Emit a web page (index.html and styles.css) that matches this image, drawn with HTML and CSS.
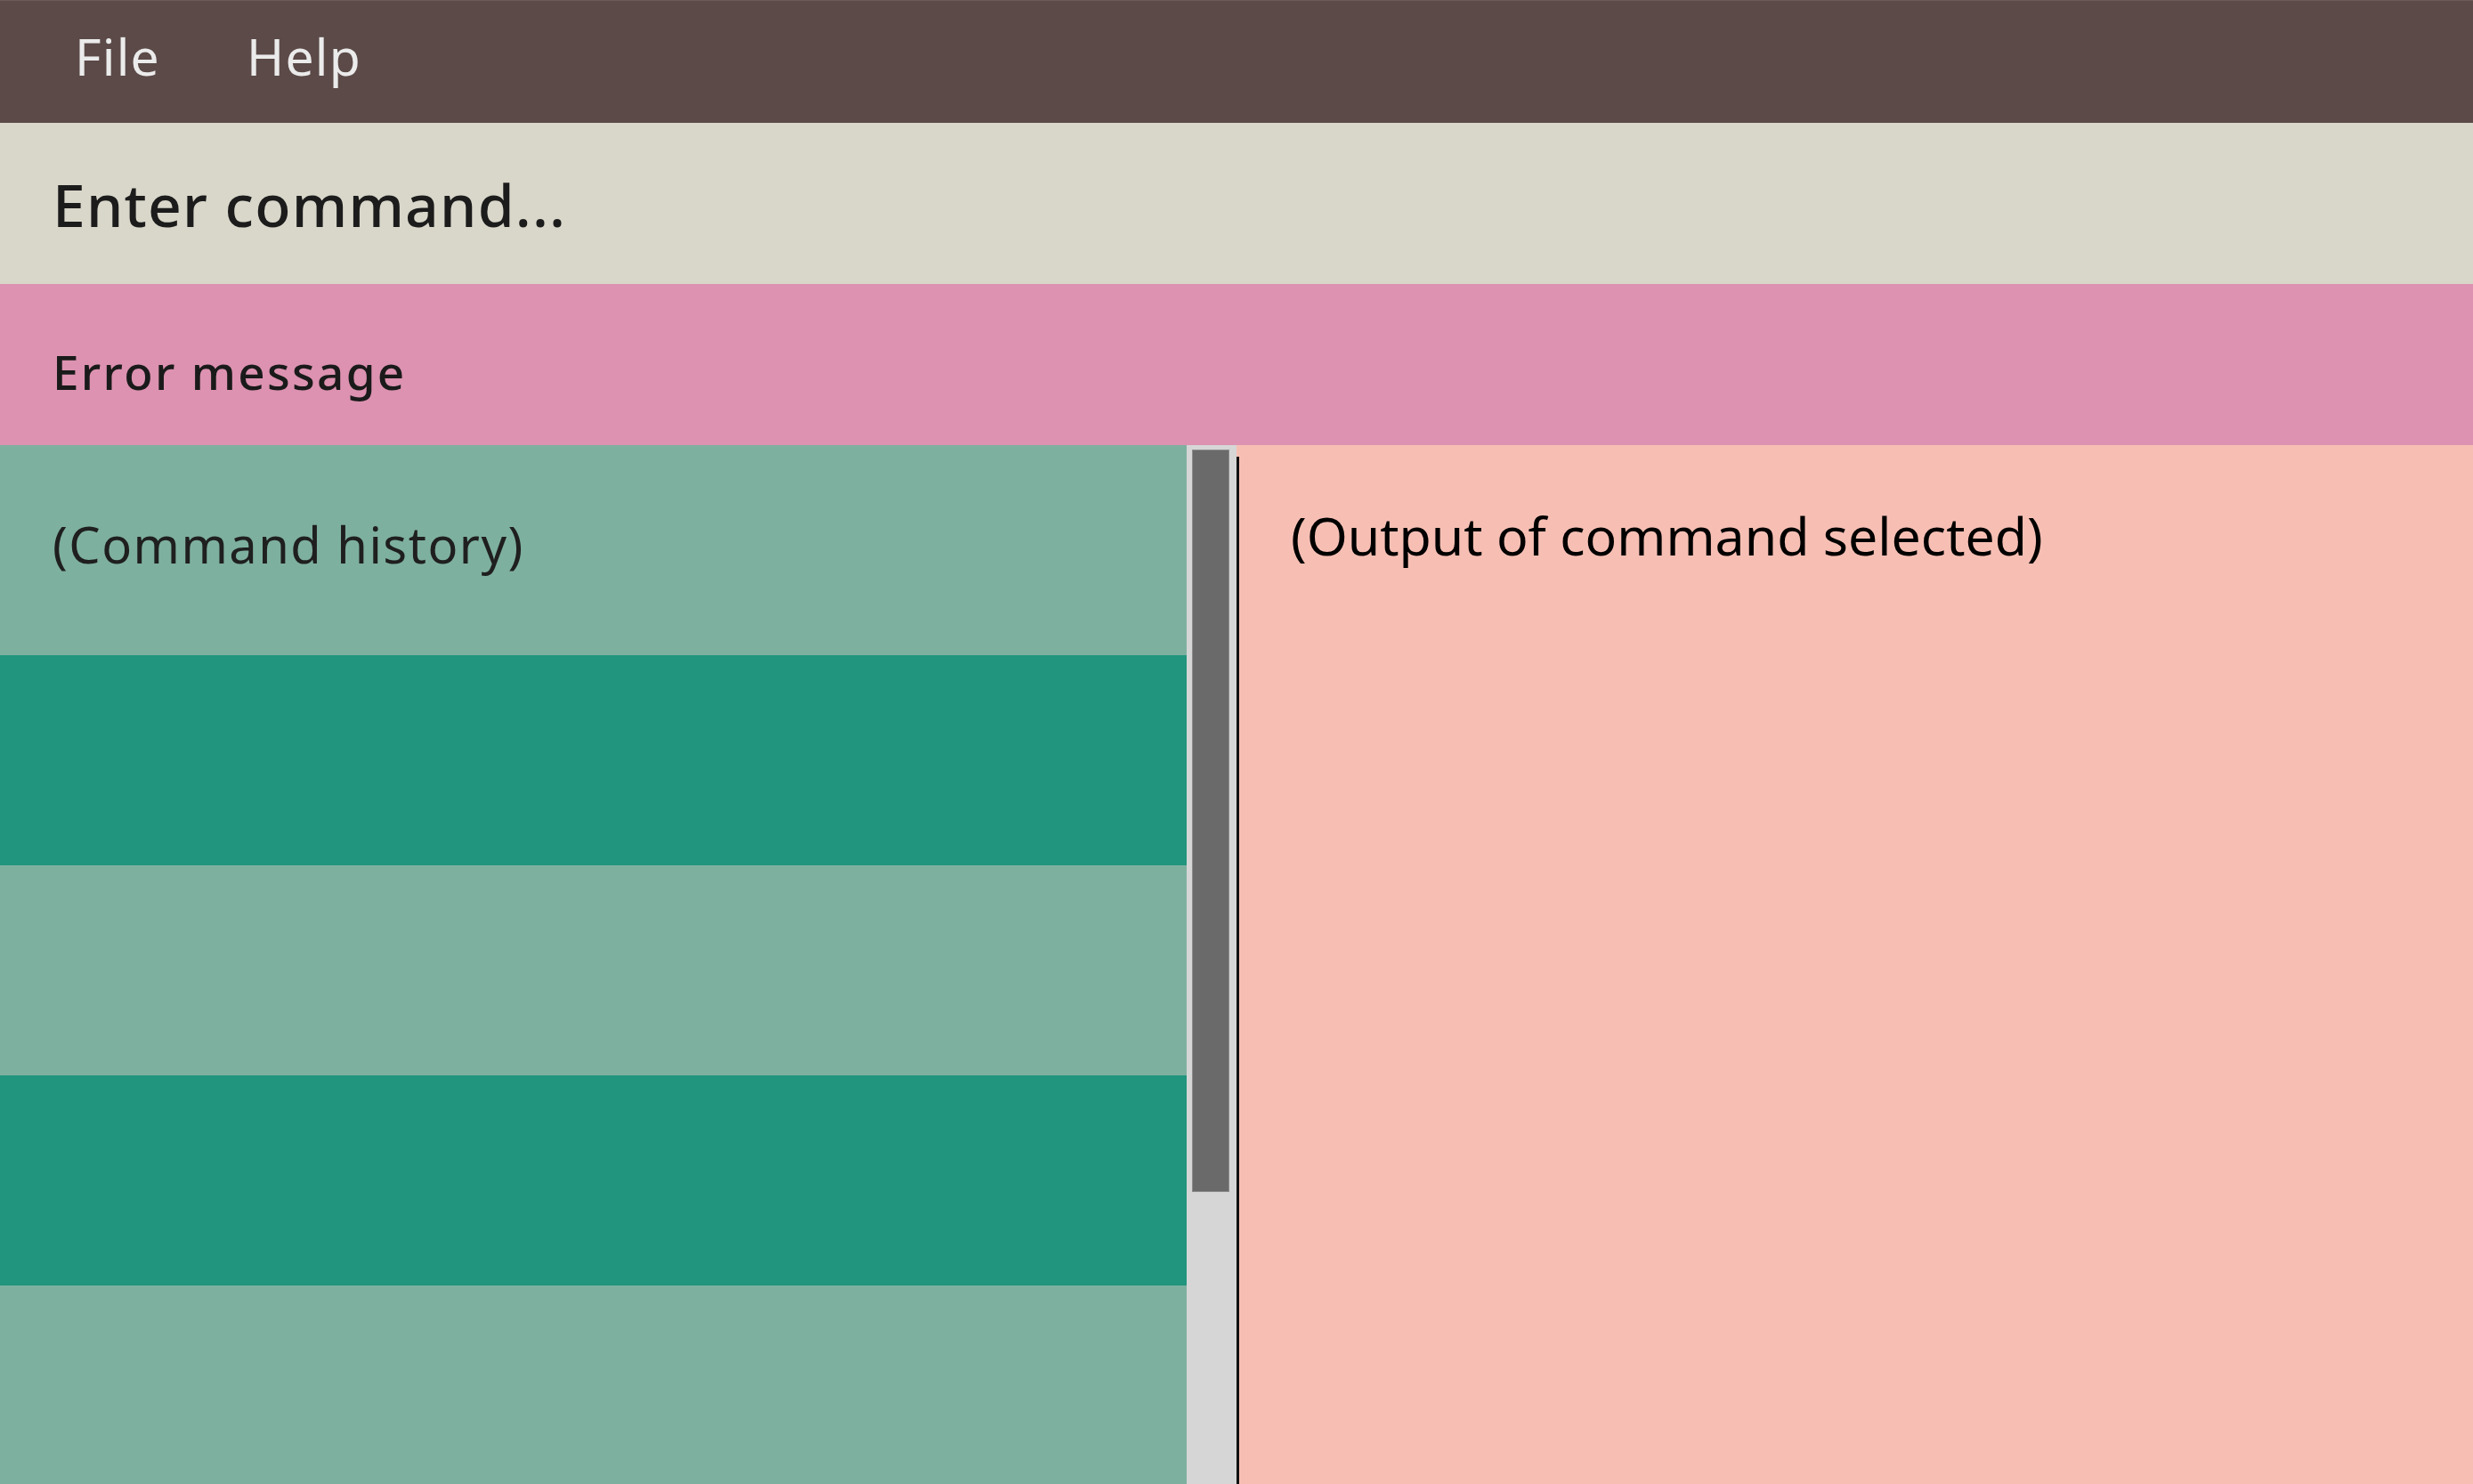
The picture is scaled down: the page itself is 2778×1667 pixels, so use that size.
FILE: index.html
```html
<!DOCTYPE html>
<html lang="en">
<head>
<meta charset="utf-8">
<title>Command Window</title>
<link rel="stylesheet" href="styles.css">
</head>
<body>
<div class="app">
  <nav class="menubar">
    <span class="menu-item">File</span>
    <span class="menu-item">Help</span>
  </nav>
  <div class="command-bar">Enter command...</div>
  <div class="error-bar">Error message</div>
  <main class="main">
    <section class="history">
      <div class="history-list">
        <div class="row light"><span class="row-text">(Command history)</span></div>
        <div class="row dark"></div>
        <div class="row light"></div>
        <div class="row dark"></div>
        <div class="row light"></div>
      </div>
      <div class="scrollbar"><div class="thumb"></div></div>
    </section>
    <div class="divider"><div class="divider-line"></div></div>
    <section class="output">(Output of command selected)</section>
  </main>
</div>
</body>
</html>
```
FILE: styles.css
```css
html, body {
  margin: 0;
  padding: 0;
}
body {
  width: 2778px;
  height: 1667px;
  overflow: hidden;
  font-family: "Noto Sans", "Open Sans", sans-serif;
}
.app {
  display: flex;
  flex-direction: column;
  height: 1667px;
}
.menubar {
  height: 138px;
  box-sizing: border-box;
  background: #5b4a48;
  display: flex;
  align-items: flex-start;
  padding: 24px 0 0 84px;
  gap: 97px;
  color: #ebebeb;
  font-size: 57px;
  line-height: 1.362;
  letter-spacing: 1.2px;
  border-top: 1px solid #6c5c5a;
}
.menu-item {
  display: block;
}
.command-bar {
  height: 181px;
  box-sizing: border-box;
  background: #d9d7ca;
  color: #1c1c1c;
  font-size: 66px;
  line-height: 1.362;
  letter-spacing: 1.2px;
  padding: 47px 0 0 59px;
  font-weight: 500;
}
.error-bar {
  height: 181px;
  box-sizing: border-box;
  background: #dc92b0;
  color: #1a1a1a;
  font-size: 53px;
  font-weight: 500;
  line-height: 1.362;
  letter-spacing: 2.3px;
  padding: 63px 0 0 59px;
}
.main {
  flex: 1;
  display: flex;
  min-height: 0;
}
.history {
  display: flex;
  width: 1389px;
  flex: none;
}
.history-list {
  width: 1333px;
  display: flex;
  flex-direction: column;
}
.row {
  height: 236px;
  flex: none;
  box-sizing: border-box;
}
.row.light { background: #7eb09f; }
.row.dark { background: #21957d; }
.row-text {
  display: block;
  padding: 73px 0 0 59px;
  font-size: 56px;
  line-height: 1.362;
  letter-spacing: 1.5px;
  color: #1f1f1f;
}
.scrollbar {
  width: 56px;
  background: #d6d6d6;
  box-sizing: border-box;
  padding: 5px 8px 0 6px;
}
.thumb {
  height: 834px;
  box-sizing: border-box;
  background: #6a6a6a;
  border: 1px solid #8c8c8c;
}
.divider {
  width: 3px;
  flex: none;
  background: #f7bfb4;
  padding-top: 13px;
  box-sizing: border-box;
  display: flex;
}
.divider-line {
  flex: 1;
  background: #111111;
}
.output {
  flex: 1;
  background: #f7bfb4;
  color: #000000;
  font-size: 59px;
  line-height: 1.362;
  padding: 61px 0 0 58px;
}
```
